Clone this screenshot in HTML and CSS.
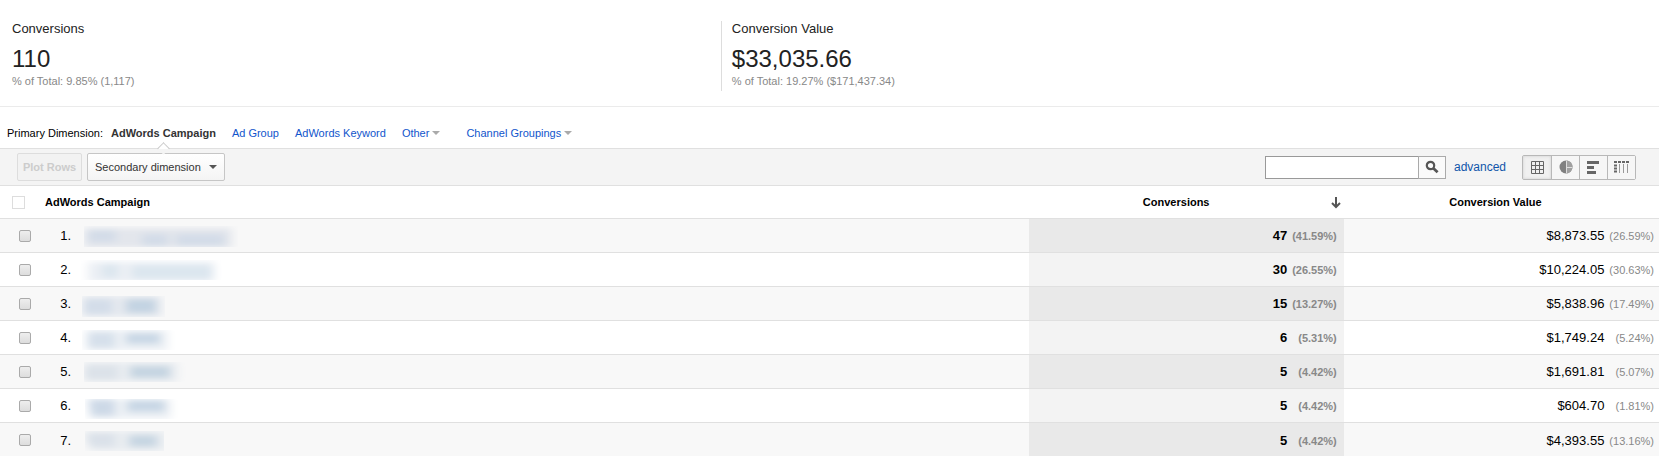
FILE: index.html
```html
<!DOCTYPE html>
<html lang="en">
<head>
    <meta charset="utf-8">
    <title>AdWords Campaign</title>
    <link rel="stylesheet" href="styles.css">
</head>
<body>
    <svg class="defs" aria-hidden="true">
        <filter id="soft" x="-20%" y="-50%" width="140%" height="200%"><feGaussianBlur stdDeviation="5 3"/></filter>
    </svg>

    <section class="summary">
        <div class="metric">
            <div class="metric-name">Conversions</div>
            <div class="metric-value">110</div>
            <div class="metric-total">% of Total: 9.85% (1,117)</div>
        </div>
        <div class="metric">
            <div class="metric-name">Conversion Value</div>
            <div class="metric-value">$33,035.66</div>
            <div class="metric-total">% of Total: 19.27% ($171,437.34)</div>
        </div>
    </section>

    <nav class="dimensions">
        <span class="label">Primary Dimension:</span>
        <a href="#" class="active">AdWords Campaign</a>
        <a href="#">Ad Group</a>
        <a href="#">AdWords Keyword</a>
        <a href="#" class="more">Other</a>
        <a href="#" class="more">Channel Groupings</a>
    </nav>

    <div class="toolbar">
        <button class="btn" disabled>Plot Rows</button>
        <button class="btn secondary">Secondary dimension</button>
        <form class="search">
            <input type="text" aria-label="Search">
            <button type="button" aria-label="Search">
                <svg width="14" height="14" viewBox="0 0 14 14"><circle cx="5.5" cy="5.5" r="3.7" fill="none" stroke="#555" stroke-width="2.2"/><path d="M8.3 8.3L12.6 12.2" stroke="#555" stroke-width="2.8"/></svg>
            </button>
        </form>
        <a href="#" class="advanced">advanced</a>
        <div class="views">
            <button class="on" aria-label="Table">
                <svg width="13" height="13" viewBox="0 0 13 13"><path d="M.5 .5h12v12H.5zM4.5 0v13M8.5 0v13M0 4.5h13M0 8.5h13" fill="none" stroke="#666"/></svg>
            </button>
            <button aria-label="Percentage">
                <svg width="14" height="14" viewBox="0 0 14 14"><circle cx="7" cy="7" r="6.5" fill="#808080"/><path d="M8 .6A6.5 6.5 0 0 1 13.4 7H8zM8 8h5.4A6.5 6.5 0 0 1 8 13.4z" fill="#a0a0a0"/><path d="M7.5 1v12M7.5 7.5H13" stroke="#ddd" fill="none"/></svg>
            </button>
            <button aria-label="Performance">
                <svg width="13" height="13" viewBox="0 0 13 13"><path d="M0 0h12v3H0zM0 5h7v3H0zM0 10h9v3H0z" fill="#666"/></svg>
            </button>
            <button aria-label="Pivot">
                <svg width="15" height="12" viewBox="0 0 15 12"><path d="M0 1h3M4 1h3M8 1h3M12 1h3M0 4.5h3M0 7.5h3M0 10.5h3" stroke="#666" stroke-width="2"/><path d="M5.5 3v9M9.5 3v9M13.5 3v9" stroke="#999"/></svg>
            </button>
        </div>
    </div>

    <table class="report">
        <thead>
            <tr>
                <th class="campaign"><div class="cell"><input type="checkbox" class="check-all" aria-label="Select all">AdWords Campaign</div></th>
                <th class="sorted">Conversions
                    <svg class="arrow" width="10" height="12" viewBox="0 0 10 12"><path d="M5 0v10M1 6l4 4 4-4" fill="none" stroke="#555" stroke-width="2"/></svg>
                </th>
                <th class="value">Conversion Value</th>
            </tr>
        </thead>
        <tbody>
            <tr>
                <td><div class="cell"><input type="checkbox" aria-label="Row 1"><span class="num">1.</span>
                    <svg class="name" viewBox="0 0 160 33"><svg x="4" y="7" width="154" height="21"><g filter="url(#soft)"><path d="M0 2h148v20H0z" fill="#e3e6ec"/><path d="M4 4h28v12H4zM58 8h26v12H58zM92 8h48v12H92z" fill="#d3dce8"/></g></svg></svg></div></td>
                <td class="conv">47 <span class="pct">(41.59%)</span></td>
                <td>$8,873.55 <span class="pct">(26.59%)</span></td>
            </tr>
            <tr>
                <td><div class="cell"><input type="checkbox" aria-label="Row 2"><span class="num">2.</span>
                    <svg class="name" viewBox="0 0 160 33"><svg x="0" y="7" width="144" height="20"><g filter="url(#soft)"><path d="M8 2h126v20H8z" fill="#ebeff4"/><path d="M22 4h16v14H22zM52 5h80v14H52z" fill="#dce6ef"/></g></svg></svg></div></td>
                <td class="conv">30 <span class="pct">(26.55%)</span></td>
                <td>$10,224.05 <span class="pct">(30.63%)</span></td>
            </tr>
            <tr>
                <td><div class="cell"><input type="checkbox" aria-label="Row 3"><span class="num">3.</span>
                    <svg class="name" viewBox="0 0 160 33"><svg x="2" y="9" width="83" height="21"><g filter="url(#soft)"><path d="M0 0h80v21H0z" fill="#e5e9ef"/><path d="M2 3h28v15H2z" fill="#d3dde9"/><path d="M44 3h30v14H44z" fill="#c3d3e2"/></g></svg></svg></div></td>
                <td class="conv">15 <span class="pct">(13.27%)</span></td>
                <td>$5,838.96 <span class="pct">(17.49%)</span></td>
            </tr>
            <tr>
                <td><div class="cell"><input type="checkbox" aria-label="Row 4"><span class="num">4.</span>
                    <svg class="name" viewBox="0 0 160 33"><svg x="2" y="9" width="98" height="20"><g filter="url(#soft)"><path d="M4 0h82v21H4z" fill="#edf1f5"/><path d="M6 2h27v16H6z" fill="#d6e0eb"/><path d="M44 3h34v11H44z" fill="#c8d7e5"/></g></svg></svg></div></td>
                <td class="conv">6 <span class="pct">(5.31%)</span></td>
                <td>$1,749.24 <span class="pct">(5.24%)</span></td>
            </tr>
            <tr>
                <td><div class="cell"><input type="checkbox" aria-label="Row 5"><span class="num">5.</span>
                    <svg class="name" viewBox="0 0 160 33"><svg x="4" y="7" width="104" height="20"><g filter="url(#soft)"><path d="M0 0h94v20H0z" fill="#e9edf1"/><path d="M0 3h34v15H0z" fill="#dce2e9"/><path d="M46 4h40v12H46z" fill="#c4d4e1"/></g></svg></svg></div></td>
                <td class="conv">5 <span class="pct">(4.42%)</span></td>
                <td>$1,691.81 <span class="pct">(5.07%)</span></td>
            </tr>
            <tr>
                <td><div class="cell"><input type="checkbox" aria-label="Row 6"><span class="num">6.</span>
                    <svg class="name" viewBox="0 0 160 33"><svg x="5" y="10" width="96" height="20"><g filter="url(#soft)"><path d="M4 0h82v20H4z" fill="#edf1f5"/><path d="M3 0h27v17H6z" fill="#cdd9e7"/><path d="M42 1h38v12H42z" fill="#c8d7e5"/></g></svg></svg></div></td>
                <td class="conv">5 <span class="pct">(4.42%)</span></td>
                <td>$604.70 <span class="pct">(1.81%)</span></td>
            </tr>
            <tr>
                <td><div class="cell"><input type="checkbox" aria-label="Row 7"><span class="num">7.</span>
                    <svg class="name" viewBox="0 0 160 33"><svg x="5" y="7" width="79" height="20"><g filter="url(#soft)"><path d="M2 0h80v20H5z" fill="#e9edf1"/><path d="M0 2h30v14H4z" fill="#dae1e9"/><path d="M44 4h28v12H44z" fill="#c6d5e2"/></g></svg></svg></div></td>
                <td class="conv">5 <span class="pct">(4.42%)</span></td>
                <td>$4,393.55 <span class="pct">(13.16%)</span></td>
            </tr>
        </tbody>
    </table>
</body>
</html>
```

FILE: styles.css
```css
* {
    box-sizing: border-box;
}
body {
    margin: 0;
    font-family: "Liberation Sans", Arial, sans-serif;
    font-size: 11px;
    color: #000;
    background: #fff;
}
a {
    color: #15c;
    text-decoration: none;
}
button {
    font-family: inherit;
    cursor: pointer;
}
.defs {
    position: absolute;
    width: 0;
    height: 0;
}

/* totals */
.summary {
    display: grid;
    grid-template-columns: 43.45% 1fr;
    padding: 21px 0 15px;
    border-bottom: 1px solid #ebebeb;
}
.metric {
    height: 70px;
    padding-left: 12px;
    color: #222;
}
.metric + .metric {
    padding-left: 10px;
    border-left: 1px solid #ddd;
}
.metric-name {
    font-size: 13px;
    line-height: 16px;
}
.metric-value {
    padding-top: 8px;
    font-size: 24px;
    line-height: 28px;
}
.metric-total {
    line-height: 16px;
    color: #888;
}

/* dimension tabs */
.dimensions {
    display: flex;
    align-items: flex-end;
    gap: 16px;
    height: 42px;
    padding-left: 7px;
    border-bottom: 1px solid #e0e0e0;
    line-height: 14px;
}
.dimensions .label,
.dimensions a {
    padding-bottom: 8px;
}
.dimensions .label {
    margin-right: -8px;
}
.dimensions .active {
    position: relative;
    font-weight: bold;
    color: #333;
}
.dimensions .active::after {
    content: "";
    position: absolute;
    left: 50%;
    bottom: -5px;
    width: 8px;
    height: 8px;
    margin-left: -4px;
    border: 1px solid #ccc;
    border-right: 0;
    border-bottom: 0;
    background: linear-gradient(135deg, #fff 50%, #f4f4f4 50%);
    transform: rotate(45deg);
}
.dimensions .more {
    display: flex;
    align-items: center;
    gap: 3px;
    margin-right: 10px;
}
.more::after,
.secondary::after {
    content: "";
    border: 4px solid transparent;
    border-top-color: #aaa;
    border-bottom: 0;
}

/* toolbar */
.toolbar {
    display: flex;
    align-items: center;
    height: 37px;
    padding: 0 23px 0 17px;
    background: #f4f4f4;
    border-bottom: 1px solid #e0e0e0;
}
.btn {
    height: 28px;
    padding: 0 7px;
    font-size: 11px;
    white-space: nowrap;
    color: #333;
    background: linear-gradient(#fff, #f4f4f4);
    border: 1px solid #c6c6c6;
    border-radius: 2px;
}
.btn:disabled {
    width: 65px;
    padding: 0;
    font-weight: bold;
    color: #ccc;
    background: #f2f2f2;
    border-color: #ddd;
}
.secondary {
    display: flex;
    align-items: center;
    justify-content: space-between;
    width: 138px;
    margin-left: 5px;
}
.secondary::after {
    border-top-color: #555;
}
.search {
    display: flex;
    margin-left: auto;
}
.search input {
    width: 153px;
    height: 23px;
    padding: 0 4px;
    border: 1px solid #999;
    border-right: 0;
}
.search button {
    display: grid;
    place-items: center;
    width: 28px;
    height: 23px;
    padding: 0;
    background: #fafafa;
    border: 1px solid #aaa;
}
.advanced {
    width: 68px;
    padding-left: 8px;
    font-size: 12px;
    color: #15a;
}
.advanced,
.views {
    flex: none;
}
.views {
    display: flex;
    margin-left: 8px;
    border: 1px solid #b8b8b8;
    border-radius: 2px;
}
.views button {
    display: grid;
    place-items: center;
    width: 28px;
    height: 23px;
    padding: 0;
    background: #f6f6f6;
    border: 0;
}
.views button + button {
    border-left: 1px solid #b8b8b8;
}
.views .on {
    background: #f0f0f0;
    box-shadow: inset 0 0 3px #ccc;
}

/* report */
.report {
    width: 100%;
    border-collapse: separate;
    border-spacing: 0;
    table-layout: fixed;
}
.report th {
    position: relative;
    width: 19%;
    height: 33px;
    padding: 0;
    border-bottom: 1px solid #e0e0e0;
}
.report .campaign {
    width: 62%;
}
.report .sorted {
    padding-right: 20px;
}
.report .value {
    padding-right: 12px;
}
.arrow {
    position: absolute;
    right: 3px;
    top: 11px;
}
.report td {
    height: 34px;
    padding: 0 5px 0 0;
    font-size: 13px;
    text-align: right;
    border-bottom: 1px solid #e0e0e0;
}
.report tbody tr:last-child td {
    border-bottom: 0;
}
.report tbody tr:nth-child(odd) {
    background: #f8f8f8;
}
.report .conv {
    padding-right: 7px;
    font-weight: bold;
    background: #f3f3f3;
}
.report tr:nth-child(odd) .conv {
    background: #e9e9e9;
}
.pct {
    display: inline-block;
    width: 46px;
    font-size: 11px;
    color: #888;
}
.cell {
    display: flex;
    align-items: center;
}
.cell input {
    appearance: none;
    width: 12px;
    height: 12px;
    margin: 0 0 0 19px;
    background: linear-gradient(#eee, #ddd);
    border: 1px solid #aaa;
    border-radius: 2px;
}
.cell .check-all {
    width: 13px;
    height: 13px;
    margin: 0 20px 0 12px;
    background: #fff;
    border-color: #ddd;
    border-radius: 0;
}
.num {
    width: 40px;
}
.name {
    width: 160px;
    height: 33px;
    margin-left: 9px;
}
```
